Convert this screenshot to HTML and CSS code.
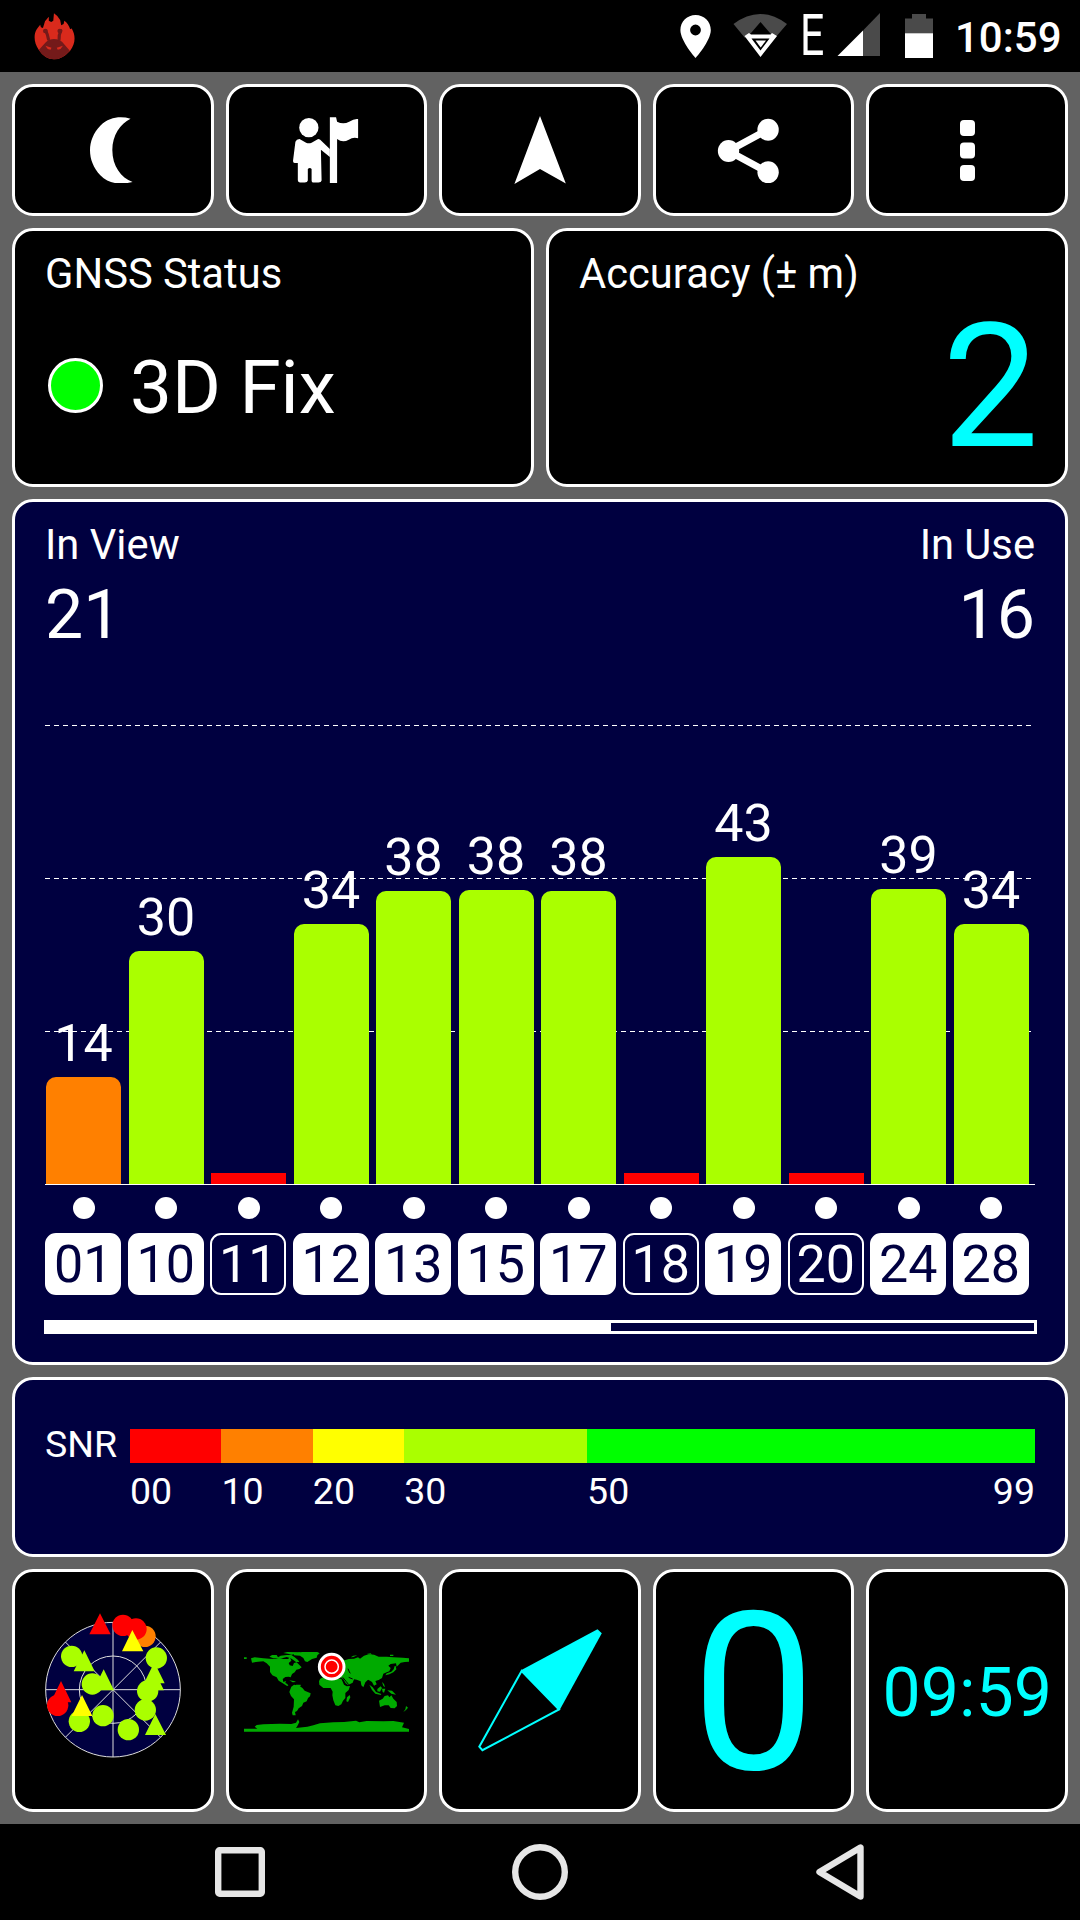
FILE: index.html
```html
<!DOCTYPE html>
<html lang="en">
<head>
    <meta charset="UTF-8">
    <meta name="viewport" content="width=device-width, initial-scale=1.0">
    <title>GNSS Status</title>
    <link rel="stylesheet" href="styles.css">
</head>
<body>
    <header class="statusbar">
        <svg class="notification" width="42" height="72" viewBox="98 0 122 216" preserveAspectRatio="none">
            <path fill="#d92a1c" d="M112 150 C98 130 96 104 106 88 Q111 80 116 74 L118 82 L124 84 L130 64 L141 50 L141 62 L148 66 L154 62 L156 40 Q168 48 174 60 L177 76 L184 72 L186 62 Q198 70 203 88 Q207 84 208 86 C220 108 218 132 203 152 Q180 178 156 178 Q130 178 112 150 Z"/>
            <path fill="#741a1a" d="M112 150 Q124 136 133 126 Q142 117 156 117 Q172 117 180 126 Q190 138 202 152 Q180 178 156 178 Q130 178 112 150 Z"/>
            <path fill="none" stroke="#741a1a" stroke-width="9" stroke-linecap="round" d="M132 92 Q138 104 140 118 M176 92 Q170 104 171 118"/>
            <circle cx="131" cy="93" r="7" fill="#741a1a"/>
            <circle cx="173" cy="93" r="7" fill="#741a1a"/>
            <path fill="#d92a1c" d="M131 137 L149 143 L146 149 L138 147 Z M182 137 L164 143 L167 149 L175 147 Z"/>
        </svg>
        <svg class="pin" width="32" height="72" viewBox="680 0 32 72">
            <path fill="#fff" fill-rule="evenodd" d="M695.6 15 C704 15 710.8 21.6 710.8 30 C710.8 41 695.6 58 695.6 58 C695.6 58 680.4 41 680.4 30 C680.4 21.6 687.2 15 695.6 15 Z M695.5 24.6 A5.4 5.4 0 1 0 695.5 35.4 A5.4 5.4 0 1 0 695.5 24.6 Z"/>
        </svg>
        <svg class="wifi" width="54" height="72" viewBox="733 0 54 72">
            <path fill="#4a4a4a" d="M733.5 24 Q760 4 787 24 L775 38 L770 33 L760.5 22 L751 33 L745 38 Z"/>
            <path fill="#fff" fill-rule="evenodd" d="M744.5 36 L749 33 L751 34.5 L770.5 34.5 L772 33 L777 36 L760.5 57 Z M751.5 38.5 L760.5 50.5 L769.5 38.5 Z"/>
            <path fill="#fff" d="M755.5 40.5 H766 L760.7 47.5 Z"/>
        </svg>
        <span class="network">E</span>
        <svg class="signal" width="43" height="72" viewBox="837 0 43 72">
            <path fill="#4a4a4a" d="M880 13 V56 H863 V30.5 Z"/>
            <path fill="#fff" d="M863 30.5 V56 H837.5 Z"/>
        </svg>
        <svg class="battery" width="28" height="72" viewBox="905 0 28 72">
            <path fill="#4a4a4a" d="M905 18.5 H912 V14 H926 V18.5 H933 V34 H905 Z"/>
            <path fill="#fff" d="M905 33.3 H933 V58 H905 Z"/>
        </svg>
        <span class="clock">10:59</span>
    </header>

    <main class="dashboard">
        <nav class="row toolbar">
            <button class="card">
                <svg width="45" height="66.6" viewBox="262 350 131 200" preserveAspectRatio="none">
                    <path fill="#fff" d="M380 355 C350 347 318 350 292 376 C252 418 252 482 292 525 C318 552 352 554 386 545 C352 532 327 497 327 449 C327 405 350 370 380 355 Z"/>
                </svg>
            </button>
            <button class="card">
                <svg width="65.8" height="66.6" viewBox="852 350 191 200" preserveAspectRatio="none">
                    <g fill="#fff">
                        <ellipse cx="898" cy="382" rx="28" ry="29"/>
                        <path d="M859 424 Q862 416 871 416 L890 427 Q898 431 906 427 L925 416 Q931 416 934 421 L959 446 V470 L933 448 L935 541 Q934 547 926 547 L910 547 Q906 547 906 541 V506 Q901 500 895 506 V541 Q894 547 886 547 H872 Q866 546 866 540 V488 H857 Q852 488 852 482 Z"/>
                        <path d="M959 351 H977 L980 364 Q998 374 1015 364 Q1030 354 1041 356 V414 Q1026 410 1014 418 Q996 428 980 416 V549 H959 Z"/>
                    </g>
                </svg>
            </button>
            <button class="card">
                <svg width="52" height="68" viewBox="514 116 52 68">
                    <path fill="#fff" d="M540 116 L565.8 183.5 L540 169 L514.4 184 Z"/>
                </svg>
            </button>
            <button class="card">
                <svg width="82.8" height="66.6" viewBox="500 350 240.6 200" preserveAspectRatio="none">
                    <path fill="none" stroke="#fff" stroke-width="21" d="M662 388 L548 452 L662 516"/>
                    <g fill="#fff">
                        <ellipse cx="663" cy="388" rx="31" ry="33"/>
                        <ellipse cx="548" cy="452" rx="31" ry="33"/>
                        <ellipse cx="663" cy="516" rx="31" ry="33"/>
                    </g>
                </svg>
            </button>
            <button class="card">
                <svg width="15" height="61" viewBox="0 0 15 61">
                    <g fill="#fff">
                        <rect width="15" height="16" rx="4"/>
                        <rect y="22.5" width="15" height="16" rx="4"/>
                        <rect y="45" width="15" height="16" rx="4"/>
                    </g>
                </svg>
            </button>
        </nav>

        <div class="row status-row">
            <section class="card panel">
                <h2>GNSS Status</h2>
                <div class="fix"><span class="led"></span>3D Fix</div>
            </section>
            <section class="card panel">
                <h2>Accuracy (± m)</h2>
                <div class="accuracy">2</div>
            </section>
        </div>

        <section class="card panel navy satellites">
            <div class="counts">
                <div>
                    <h2>In View</h2>
                    <div class="count">21</div>
                </div>
                <div class="right">
                    <h2>In Use</h2>
                    <div class="count">16</div>
                </div>
            </div>
            <div class="chart">
                <div class="sat"><div class="slot"><b>14</b><i class="bar orange" style="height: 107px"></i></div><span class="dot"></span><span class="chip used">01</span></div>
                <div class="sat"><div class="slot"><b>30</b><i class="bar" style="height: 233px"></i></div><span class="dot"></span><span class="chip used">10</span></div>
                <div class="sat"><div class="slot"><i class="bar none"></i></div><span class="dot"></span><span class="chip">11</span></div>
                <div class="sat"><div class="slot"><b>34</b><i class="bar" style="height: 260px"></i></div><span class="dot"></span><span class="chip used">12</span></div>
                <div class="sat"><div class="slot"><b>38</b><i class="bar" style="height: 293px"></i></div><span class="dot"></span><span class="chip used">13</span></div>
                <div class="sat"><div class="slot"><b>38</b><i class="bar" style="height: 294px"></i></div><span class="dot"></span><span class="chip used">15</span></div>
                <div class="sat"><div class="slot"><b>38</b><i class="bar" style="height: 293px"></i></div><span class="dot"></span><span class="chip used">17</span></div>
                <div class="sat"><div class="slot"><i class="bar none"></i></div><span class="dot"></span><span class="chip">18</span></div>
                <div class="sat"><div class="slot"><b>43</b><i class="bar" style="height: 327px"></i></div><span class="dot"></span><span class="chip used">19</span></div>
                <div class="sat"><div class="slot"><i class="bar none"></i></div><span class="dot"></span><span class="chip">20</span></div>
                <div class="sat"><div class="slot"><b>39</b><i class="bar" style="height: 295px"></i></div><span class="dot"></span><span class="chip used">24</span></div>
                <div class="sat"><div class="slot"><b>34</b><i class="bar" style="height: 260px"></i></div><span class="dot"></span><span class="chip used">28</span></div>
            </div>
            <div class="scroll"><div class="thumb"></div></div>
        </section>

        <section class="card panel navy snr">
            <span class="snr-label">SNR</span>
            <div class="scale">
                <i class="red"></i><i class="orange"></i><i class="yellow"></i><i class="lime"></i><i class="green"></i>
                <span>00</span><span>10</span><span>20</span><span>30</span><span class="ends"><span>50</span><span>99</span></span>
            </div>
        </section>

        <div class="row pages">
            <div class="card">
                <svg width="190" height="190" viewBox="54 107 570 570">
                    <circle cx="339" cy="391" r="202" fill="#000040" stroke="#ddd" stroke-width="3"/>
                    <circle cx="339" cy="391" r="101" fill="none" stroke="#ddd" stroke-width="3"/>
                    <path stroke="#ddd" stroke-width="3" d="M339 189 V593 M137 391 H541 M196 248 L482 534 M482 248 L196 534"/>
                    <g fill="#ff8000"><circle cx="435" cy="231" r="32"/></g>
                    <g fill="#f00">
                        <circle cx="369" cy="198" r="32"/>
                        <circle cx="408" cy="209" r="32"/>
                        <circle cx="173" cy="438" r="32"/>
                        <path d="M300 162 L332 225 H268 Z M183 365 L214 429 H152 Z"/>
                    </g>
                    <g fill="#af0">
                        <circle cx="215" cy="291" r="32"/>
                        <circle cx="277" cy="374" r="32"/>
                        <circle cx="469" cy="296" r="32"/>
                        <circle cx="443" cy="395" r="32"/>
                        <circle cx="436" cy="452" r="32"/>
                        <circle cx="385" cy="511" r="32"/>
                        <circle cx="309" cy="469" r="32"/>
                        <circle cx="238" cy="486" r="32"/>
                        <path d="M253 273 L284 336 H221 Z M311 330 L342 393 H280 Z M463 309 L494 372 H432 Z M461 331 L492 393 H430 Z M466 464 L498 527 H435 Z"/>
                    </g>
                    <path fill="#ff0" d="M397 212 L430 276 H366 Z M246 407 L277 470 H215 Z"/>
                </svg>
            </div>
            <div class="card">
                <svg width="165.7" height="83" viewBox="72 267 497 249">
                    <g fill="#00aa00">
                        <!-- Americas -->
                        <path d="M93 295 L104 292 L130 295 L148 296 L168 297 L176 294 L190 297 L204 297 L210 292 L214 302 L206 309 L209 316 L218 318 L222 309 L230 307 L236 313 L245 322 L238 327 L229 329 L224 337 L216 342 L212 352 L206 350 L196 351 L188 357 L190 366 L198 363 L196 369 L202 372 L205 378 L200 377 L186 368 L176 362 L170 352 L157 346 L150 336 L150 320 L140 310 L130 304 L114 305 L96 308 Z"/>
                        <path d="M148 290 L156 285 L170 285 L174 292 L182 287 L200 285 L214 285 L224 292 L234 300 L238 306 L228 306 L220 300 L212 295 L200 291 L180 296 L160 295 Z"/>
                        <path d="M190 279 L202 276 L244 277 L238 280 L214 284 L204 281 Z"/>
                        <path d="M222 281 L246 276 L292 276 L299 280 L292 286 L290 293 L276 297 L262 306 L255 304 L250 294 L240 287 L222 286 Z"/>
                        <path d="M214 380 L222 374 L238 377 L248 385 L254 392 L272 400 L270 409 L264 414 L260 424 L250 428 L246 438 L236 445 L231 453 L225 456 L227 466 L218 466 L216 458 L221 440 L222 418 L213 408 L208 396 L211 388 Z"/>
                        <path d="M208 361 L222 363 L228 366 L218 367 Z M228 374 H242 V378 H228 Z"/>
                        <!-- Africa -->
                        <path d="M300 357 L310 351 L334 350 L350 356 L364 356 L372 374 L380 379 L390 378 L386 390 L376 399 L376 414 L369 422 L364 433 L355 438 L346 436 L340 421 L337 406 L338 395 L332 384 L310 384 L298 374 L297 364 Z"/>
                        <path d="M389 405 L391 412 L384 426 L379 424 L381 412 Z"/>
                        <!-- Eurasia -->
                        <path d="M374 301 L386 297 L402 296 L414 292 L420 296 L432 287 L446 283 L462 284 L476 290 L500 290 L520 292 L548 293 L567 295 L567 305 L554 306 L542 308 L530 320 L528 310 L512 312 L505 317 L512 324 L508 334 L500 337 L490 341 L486 354 L476 360 L466 363 L470 373 L462 377 L456 366 L450 362 L444 359 L436 367 L430 382 L424 376 L422 364 L410 359 L402 358 L398 368 L384 375 L377 370 L370 358 L364 353 L350 350 L336 346 L310 347 L302 342 L306 334 L315 330 L330 316 L345 302 L360 292 Z"/>
                        <path d="M392 292 L400 287 L412 286 L400 291 Z M440 282 L452 280 L456 284 Z M510 284 H520 V288 H510 Z M71 292 H80 V297 H71 Z"/>
                        <path d="M524 318 L527 318 L529 328 L520 337 L508 343 L496 346 L500 340 L514 335 L521 328 Z"/>
                        <!-- South-east Asia and Oceania -->
                        <path d="M448 374 L458 382 L468 396 L484 402 L482 405 L466 401 L456 390 Z M472 387 L482 379 L486 384 L480 395 L472 394 Z M486 386 L496 386 L492 398 L488 396 Z M486 366 L492 372 L495 382 L490 378 Z M502 391 L516 392 L528 404 L514 401 Z"/>
                        <path d="M477 422 L488 416 L494 408 L504 406 L508 412 L514 406 L520 416 L530 426 L531 438 L524 445 L512 444 L506 436 L494 436 L480 441 Z"/>
                        <path d="M558 438 L564 443 L558 450 L550 456 L556 448 Z"/>
                        <!-- Antarctica -->
                        <path d="M71 506 L112 506 L104 500 L110 495 L130 493 L180 491 L214 492 L228 488 L234 478 L238 486 L232 498 L228 504 L262 500 L280 496 L300 490 L340 487 L372 486 L408 482 L418 487 L440 483 L490 484 L520 483 L552 488 L546 502 L567 507 V515 H71 Z"/>
                    </g>
                    <path fill="none" stroke="#000" stroke-width="3" d="M368 352 L378 364 L386 374 M386 352 L398 357 M384 326 L388 336 L391 340"/>
                    <circle cx="335" cy="320" r="37" fill="#f00" stroke="#fff" stroke-width="9"/>
                    <circle cx="335" cy="320" r="20" fill="#f00" stroke="#fff" stroke-width="4.5"/>
                </svg>
            </div>
            <div class="card">
                <svg width="124" height="124" viewBox="478 1628 124 124">
                    <path fill="#0ff" d="M597.5 1629.3 L601.8 1633.3 L559.5 1710.2 L521 1670.3 Z"/>
                    <path fill="none" stroke="#0ff" stroke-width="2" d="M521.6 1671 L479.3 1746.7 L482.4 1750.2 L559 1709.5 Z"/>
                </svg>
            </div>
            <div class="card speed">0</div>
            <div class="card time">09:59</div>
        </div>
    </main>

    <footer class="navbar">
        <svg width="50" height="50" viewBox="0 0 50 50"><rect x="3.2" y="3.2" width="43.6" height="43.6" rx="1.5"/></svg>
        <svg width="56" height="56" viewBox="0 0 56 56"><circle cx="28" cy="28" r="24.8"/></svg>
        <svg width="50" height="56" viewBox="0 0 50 56"><path d="M45.5 3.5 V52.5 L4.5 28 Z"/></svg>
    </footer>
</body>
</html>
```

FILE: styles.css
```css
* {
    box-sizing: border-box;
}
body {
    margin: 0;
    width: 1080px;
    height: 1920px;
    display: flex;
    flex-direction: column;
    background: #626262;
    color: #fff;
    font-family: Roboto, sans-serif;
    overflow: hidden;
}
svg {
    display: block;
    flex: none;
}
h2 {
    margin: 0;
    font-size: 41.7px;
    font-weight: 400;
    line-height: 55px;
}

/* status bar */
.statusbar {
    height: 72px;
    display: flex;
    align-items: center;
    background: #000;
    padding-left: 34px;
}
.pin {
    margin-left: auto;
}
.wifi {
    margin-left: 21px;
}
.network {
    width: 20px;
    margin-left: 13px;
    font-size: 57px;
    font-weight: 400;
    line-height: 72px;
    transform: scaleX(0.75);
    transform-origin: left;
}
.signal {
    margin-left: 17px;
}
.battery {
    margin-left: 25px;
}
.clock {
    width: 125px;
    margin-left: 22px;
    padding-top: 3px;
    font-size: 42px;
    font-weight: 500;
    line-height: 76px;
}

/* cards */
.dashboard {
    height: 1752px;
    padding: 12px;
    display: flex;
    flex-direction: column;
    gap: 12px;
}
.row {
    display: grid;
    grid-template-columns: repeat(5, 1fr);
    gap: 12px;
}
.card {
    display: flex;
    align-items: center;
    justify-content: center;
    padding: 0;
    background: #000;
    border: 3px solid #fff;
    border-radius: 21px;
    color: inherit;
    font-family: inherit;
}
.panel {
    display: block;
    padding: 15px 30px 0;
}
.navy {
    background: #000040;
}
.toolbar {
    height: 132px;
}
.status-row {
    height: 259.4px;
    grid-template-columns: repeat(2, 1fr);
}
.fix {
    display: flex;
    align-items: center;
    margin-top: 42px;
    font-size: 74.6px;
    line-height: 90px;
}
.led {
    width: 55px;
    height: 55px;
    margin: 0 27px 6px 3px;
    background: #0f0;
    border: 3px solid #fff;
    border-radius: 50%;
}
.accuracy {
    margin: 1px -4px 0 0;
    color: #0ff;
    font-size: 172px;
    line-height: 170px;
    text-align: right;
}

/* satellites */
.satellites {
    height: 865.6px;
}
.counts {
    display: flex;
    justify-content: space-between;
}
.right {
    text-align: right;
}
.count {
    height: 82px;
    font-size: 68px;
    line-height: 86px;
}
.chart {
    --dash: repeating-linear-gradient(90deg, #fff 0 5px, transparent 5px 9px);
    display: flex;
    background: var(--dash) 0 71px, var(--dash) 0 224px, var(--dash) 0 377px;
    background-size: 986px 1px;
    background-repeat: no-repeat;
}
.sat {
    width: 82.5px;
    display: flex;
    flex-direction: column;
}
.slot {
    height: 531px;
    padding: 0 6.5px 0 1px;
    display: flex;
    flex-direction: column;
    justify-content: flex-end;
    border-bottom: 1px solid #fff;
}
.slot b {
    margin-bottom: 3.6px;
    font-size: 52px;
    font-weight: 400;
    line-height: 60px;
    text-align: center;
}
.bar {
    background: #af0;
    border-radius: 10px 10px 0 0;
}
.bar.none {
    height: 11px;
    background: #f00;
    border-radius: 0;
}
.orange {
    background: #ff8000;
}
.dot {
    width: 22px;
    height: 22px;
    margin: 12px 0 0 27.5px;
    border-radius: 50%;
    background: #fff;
}
.chip {
    width: 76.4px;
    height: 62px;
    margin-top: 14px;
    border: 2px solid #fff;
    border-radius: 11px;
    font-size: 52px;
    line-height: 60px;
    text-align: center;
}
.chip.used {
    background: #fff;
    color: #000040;
}
.scroll {
    width: 993px;
    height: 14px;
    margin: 25px 0 0 -1px;
    border: 3px solid #fff;
}
.thumb {
    width: 564px;
    height: 8px;
    background: #fff;
}

/* signal scale */
.snr {
    height: 179.8px;
    display: flex;
    align-items: flex-start;
    justify-content: space-between;
    font-size: 37.5px;
    line-height: 44px;
}
.snr-label {
    margin-top: 27px;
}
.scale {
    width: 905px;
    margin-top: 34px;
    display: grid;
    grid-template-columns: 10fr 10fr 10fr 20fr 49fr;
    grid-template-rows: 34px 44px;
    row-gap: 6.5px;
}
.red {
    background: #f00;
}
.yellow {
    background: #ff0;
}
.lime {
    background: #af0;
}
.green {
    background: #0f0;
}
.ends {
    display: flex;
    justify-content: space-between;
}

/* page shortcuts */
.pages {
    height: 243.2px;
}
.speed {
    padding-top: 7px;
    color: #0ff;
    font-size: 220px;
    line-height: 230px;
}
.time {
    padding-top: 5px;
    color: #0ff;
    font-size: 68px;
}

.navbar {
    height: 96px;
    display: flex;
    align-items: center;
    justify-content: space-between;
    padding: 0 215px;
    background: #000;
}
.navbar svg {
    fill: none;
    stroke: #e6e6e6;
    stroke-width: 6.4;
    stroke-linejoin: round;
}
```
